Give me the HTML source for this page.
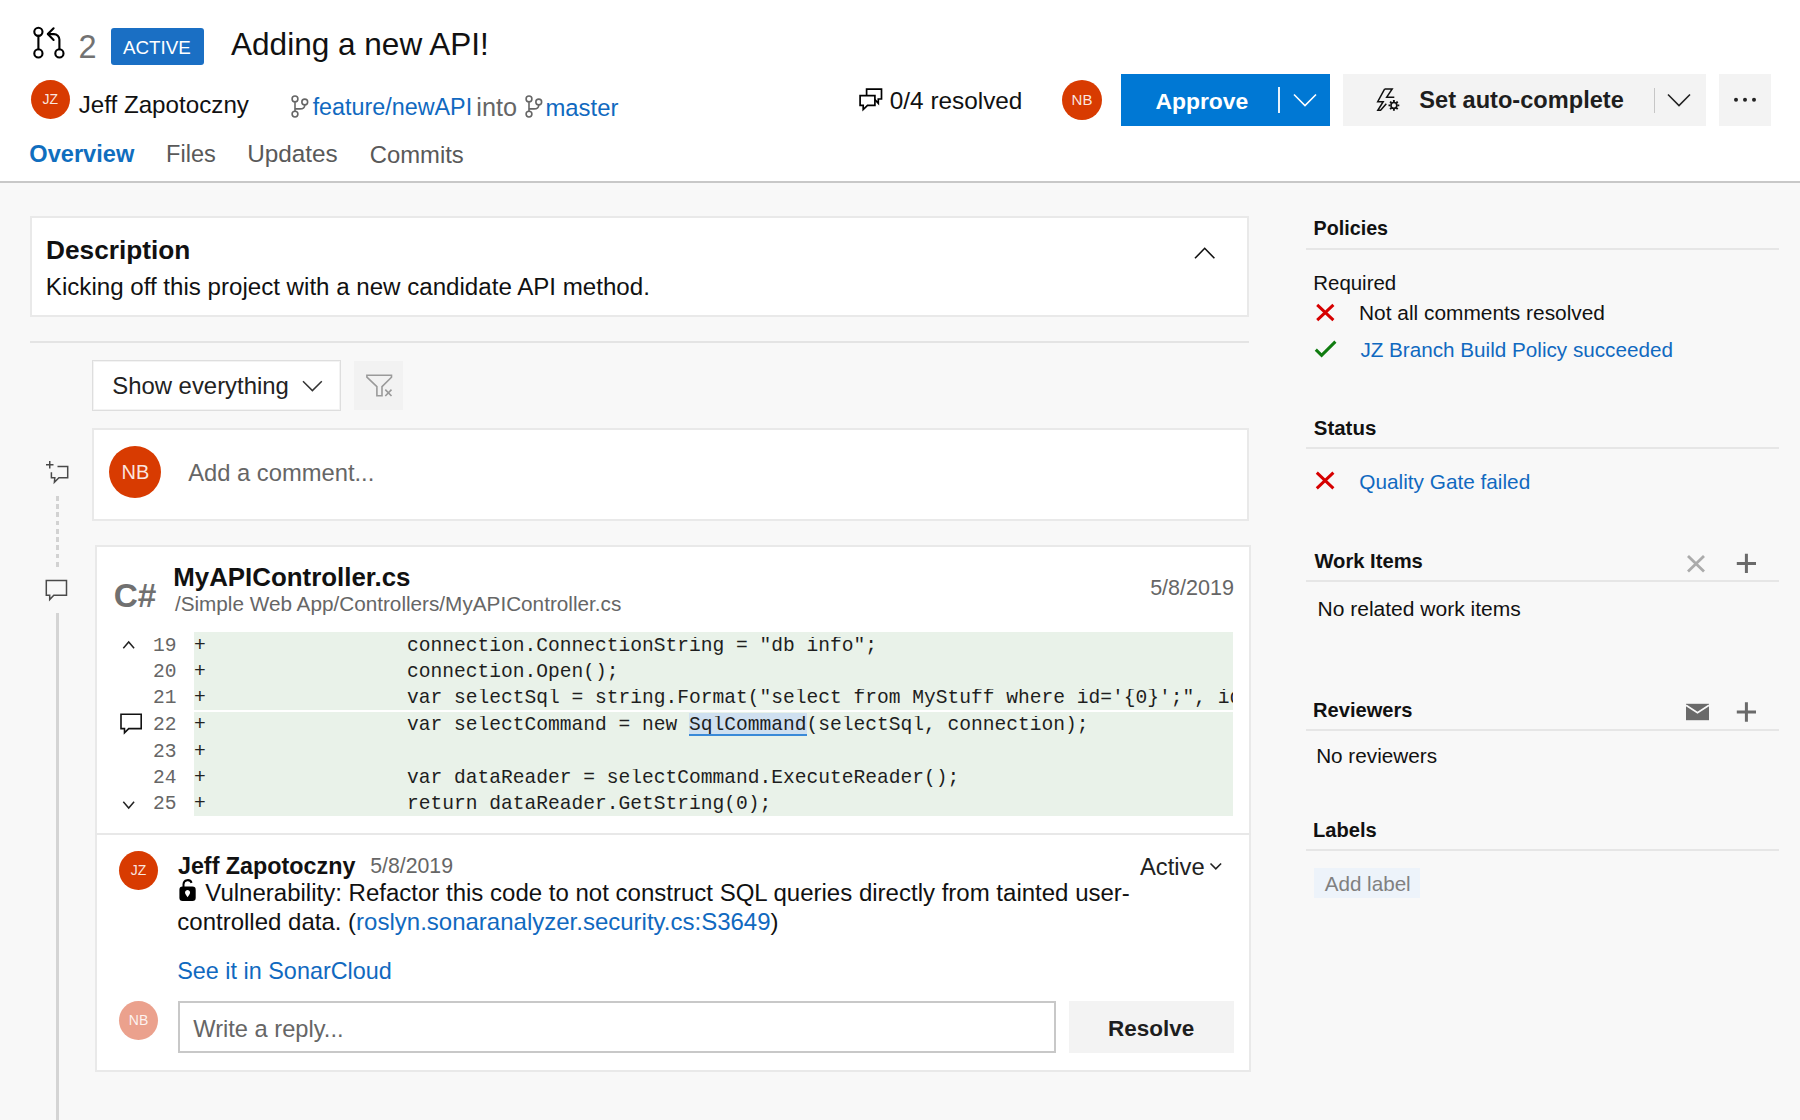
<!DOCTYPE html>
<html><head><meta charset="utf-8"><title>Pull request</title>
<style>
html,body{margin:0;padding:0}
body{width:1800px;height:1120px;position:relative;overflow:hidden;background:#f8f8f8;font-family:"Liberation Sans",sans-serif}
.t{position:absolute;white-space:pre}
.r{position:absolute}
svg.r{overflow:visible}
.av{border-radius:50%;text-align:center;font-family:"Liberation Sans",sans-serif}
</style></head><body>
<div class="r" style="left:0px;top:0px;width:1800px;height:181px;background:#fff"></div>
<div class="r" style="left:0px;top:181px;width:1800px;height:2px;background:#c8c8c8"></div>
<svg class="r" style="left:28px;top:22px;" width="44" height="40" viewBox="28 22 44 40"><g fill="none" stroke="#000" stroke-width="2.1" stroke-linecap="round" stroke-linejoin="round"><circle cx="38.4" cy="31.8" r="4.1"/><circle cx="38.4" cy="53.4" r="4.1"/><circle cx="59.4" cy="53.4" r="4.1"/><path d="M38.4 35.9V49.3"/><path d="M59.4 49.3V39.6A5.5 5.5 0 0 0 53.9 34.1H48"/><path d="M53.6 28.3L47.8 34.1L53.6 39.9"/></g></svg>
<div class="t" style="left:78.38px;top:30.88px;font-size:32.50px;line-height:32.50px;font-family:'Liberation Sans',sans-serif;font-weight:normal;color:#727272;">2</div>
<div class="r" style="left:111px;top:28px;width:93px;height:37px;background:#1a6fc4;border-radius:3px"></div>
<div class="t" style="left:123.00px;top:38.81px;font-size:18.77px;line-height:18.77px;font-family:'Liberation Sans',sans-serif;font-weight:normal;color:#fff;">ACTIVE</div>
<div class="t" style="left:231.00px;top:29.28px;font-size:31.56px;line-height:31.56px;font-family:'Liberation Sans',sans-serif;font-weight:normal;color:#111;">Adding a new API!</div>
<div class="r av" style="left:30.65px;top:79.75px;width:39.5px;height:39.5px;background:#d83b01;font-size:14px;line-height:39.5px;color:rgba(255,255,255,.88)">JZ</div>
<div class="t" style="left:78.64px;top:93.01px;font-size:24.20px;line-height:24.20px;font-family:'Liberation Sans',sans-serif;font-weight:normal;color:#111;">Jeff Zapotoczny</div>
<svg class="r" style="left:289px;top:94px;" width="24" height="26" viewBox="289 94 24 26"><g fill="none" stroke="#666" stroke-width="1.6" stroke-linecap="round"><circle cx="295" cy="98.9" r="2.9"/><circle cx="295" cy="114.1" r="2.9"/><circle cx="304.75" cy="102" r="2.9"/><path d="M295 101.8V111.2"/><path d="M304.75 104.9C304.75 108 302.5 108.9 300 108.9H295.6"/></g></svg>
<div class="t" style="left:312.65px;top:96.25px;font-size:23.33px;line-height:23.33px;font-family:'Liberation Sans',sans-serif;font-weight:normal;color:#1069c0;">feature/newAPI</div>
<div class="t" style="left:476.36px;top:94.62px;font-size:25.25px;line-height:25.25px;font-family:'Liberation Sans',sans-serif;font-weight:normal;color:#666;">into</div>
<svg class="r" style="left:523px;top:94px;" width="24" height="26" viewBox="523 94 24 26"><g fill="none" stroke="#666" stroke-width="1.6" stroke-linecap="round"><circle cx="529" cy="98.9" r="2.9"/><circle cx="529" cy="114.1" r="2.9"/><circle cx="538.75" cy="102" r="2.9"/><path d="M529 101.8V111.2"/><path d="M538.75 104.9C538.75 108 536.5 108.9 534 108.9H529.6"/></g></svg>
<div class="t" style="left:545.45px;top:95.79px;font-size:23.87px;line-height:23.87px;font-family:'Liberation Sans',sans-serif;font-weight:normal;color:#1069c0;">master</div>
<div class="t" style="left:29.36px;top:142.93px;font-size:23.58px;line-height:23.58px;font-family:'Liberation Sans',sans-serif;font-weight:bold;color:#106ebe;">Overview</div>
<div class="t" style="left:166.12px;top:142.95px;font-size:23.56px;line-height:23.56px;font-family:'Liberation Sans',sans-serif;font-weight:normal;color:#595959;">Files</div>
<div class="t" style="left:247.17px;top:142.29px;font-size:24.34px;line-height:24.34px;font-family:'Liberation Sans',sans-serif;font-weight:normal;color:#595959;">Updates</div>
<div class="t" style="left:369.81px;top:142.72px;font-size:23.83px;line-height:23.83px;font-family:'Liberation Sans',sans-serif;font-weight:normal;color:#595959;">Commits</div>
<svg class="r" style="left:854px;top:82px;" width="34" height="34" viewBox="854 82 34 34"><g fill="none" stroke="#000" stroke-width="1.7" stroke-linejoin="miter"><path d="M860.1 95.7H874.9V105.4H867.5L863.2 109.6V105.4H860.1Z"/><path d="M866.6 95.7V89.1H881.5V99H878.3V103.3L874.9 99.6"/></g></svg>
<div class="t" style="left:889.83px;top:88.89px;font-size:24.34px;line-height:24.34px;font-family:'Liberation Sans',sans-serif;font-weight:normal;color:#111;">0/4 resolved</div>
<div class="r av" style="left:1062.00px;top:79.50px;width:40px;height:40px;background:#d83b01;font-size:15px;line-height:40px;color:rgba(255,255,255,.88)">NB</div>
<div class="r" style="left:1121px;top:74px;width:209px;height:52px;background:#0078d4"></div>
<div class="t" style="left:1155.43px;top:89.51px;font-size:22.90px;line-height:22.90px;font-family:'Liberation Sans',sans-serif;font-weight:bold;color:#fff;">Approve</div>
<div class="r" style="left:1278px;top:87px;width:2px;height:25.5px;background:rgba(255,255,255,.9)"></div>
<svg class="r" style="left:1290px;top:90px;" width="30" height="20" viewBox="1290 90 30 20"><path d="M1294 94.5L1305 105.5L1316 94.5" fill="none" stroke="#fff" stroke-width="1.6"/></svg>
<div class="r" style="left:1343px;top:74px;width:362.5px;height:51.5px;background:#f3f3f3"></div>
<svg class="r" style="left:1372px;top:84px;" width="34" height="32" viewBox="1372 84 34 32"><g fill="none" stroke="#111" stroke-width="1.5" stroke-linejoin="miter"><path d="M1384.7 88.9H1392.2L1386.7 97.2H1394.3"/><path d="M1386.3 103.7L1380.6 110.3H1377.8L1383.2 101.7H1377.7L1384.7 88.9"/></g><g fill="none" stroke="#111" stroke-width="1.6"><circle cx="1393.9" cy="105.4" r="2.9"/></g><g stroke="#111" stroke-width="1.9" stroke-linecap="butt"><path d="M1393.9 100V102M1393.9 108.8V110.8M1388.5 105.4H1390.5M1397.3 105.4H1399.3M1390.1 101.6L1391.5 103M1396.3 107.8L1397.7 109.2M1397.7 101.6L1396.3 103M1391.5 107.8L1390.1 109.2"/></g></svg>
<div class="t" style="left:1419.29px;top:88.91px;font-size:23.60px;line-height:23.60px;font-family:'Liberation Sans',sans-serif;font-weight:bold;color:#1e1e1e;">Set auto-complete</div>
<div class="r" style="left:1653.5px;top:87.5px;width:1.5px;height:25.0px;background:#c6c6c6"></div>
<svg class="r" style="left:1664px;top:90px;" width="30" height="20" viewBox="1664 90 30 20"><path d="M1668 94.5L1679 105.5L1690 94.5" fill="none" stroke="#222" stroke-width="1.6"/></svg>
<div class="r" style="left:1719px;top:74px;width:52px;height:51.5px;background:#f3f3f3"></div>
<svg class="r" style="left:1730px;top:94px;" width="30" height="12" viewBox="1730 94 30 12"><g fill="#222"><circle cx="1736" cy="99.8" r="2"/><circle cx="1745" cy="99.8" r="2"/><circle cx="1754" cy="99.8" r="2"/></g></svg>
<div class="r" style="left:30px;top:216px;width:1219px;height:101px;background:#fff;box-sizing:border-box;border:2px solid #e9e9e9"></div>
<div class="t" style="left:46.09px;top:237.19px;font-size:26.23px;line-height:26.23px;font-family:'Liberation Sans',sans-serif;font-weight:bold;color:#111;">Description</div>
<div class="t" style="left:45.87px;top:274.98px;font-size:24.12px;line-height:24.12px;font-family:'Liberation Sans',sans-serif;font-weight:normal;color:#111;">Kicking off this project with a new candidate API method.</div>
<svg class="r" style="left:1190px;top:244px;" width="30" height="18" viewBox="1190 244 30 18"><path d="M1195 258.3L1204.7 248.3L1214.4 258.3" fill="none" stroke="#111" stroke-width="1.6"/></svg>
<div class="r" style="left:30px;top:341px;width:1219px;height:2px;background:#e4e4e4"></div>
<div class="r" style="left:92px;top:360px;width:249px;height:51px;background:#fff;box-sizing:border-box;border:1px solid #dedede;box-shadow:inset 0 0 0 1px #f3f3f3"></div>
<div class="t" style="left:112.22px;top:374.06px;font-size:23.90px;line-height:23.90px;font-family:'Liberation Sans',sans-serif;font-weight:normal;color:#222;">Show everything</div>
<svg class="r" style="left:300px;top:378px;" width="26" height="16" viewBox="300 378 26 16"><path d="M303 381.3L312.4 390.6L321.8 381.3" fill="none" stroke="#333" stroke-width="1.5"/></svg>
<div class="r" style="left:354px;top:361px;width:49px;height:49px;background:#f2f2f2"></div>
<svg class="r" style="left:362px;top:370px;" width="34" height="30" viewBox="362 370 34 30"><g fill="none" stroke="#9a9a9a" stroke-width="1.6" stroke-linejoin="miter"><path d="M366.9 375.3H391.5V377.2L382 386.6V395.8H376.9V386.6L366.9 377.2Z"/><path d="M385.3 389.6L391.5 396M391.5 389.6L385.3 396"/></g></svg>
<div class="r" style="left:92px;top:428px;width:1157px;height:93px;background:#fff;box-sizing:border-box;border:2px solid #e9e9e9"></div>
<div class="r av" style="left:109.40px;top:446.00px;width:52px;height:52px;background:#d83b01;font-size:20px;line-height:52px;color:rgba(255,255,255,.88)">NB</div>
<div class="t" style="left:188.20px;top:460.88px;font-size:23.76px;line-height:23.76px;font-family:'Liberation Sans',sans-serif;font-weight:normal;color:#666;">Add a comment...</div>
<svg class="r" style="left:42px;top:458px;" width="30" height="28" viewBox="42 458 30 28"><g fill="none" stroke="#4a4a4a" stroke-width="1.5" stroke-linejoin="miter"><path d="M49.75 461V468.4M46 464.7H53.5"/><path d="M57.5 466.4H67.7V477.8H58.9L54.4 482.2L54.8 477.8H51.4V472.3"/></g></svg>
<div class="r" style="left:55.6px;top:496px;width:3.1999999999999957px;height:71.5px;background:repeating-linear-gradient(to bottom,#d2d2d2 0,#d2d2d2 4.6px,transparent 4.6px,transparent 8.25px)"></div>
<svg class="r" style="left:42px;top:576px;" width="30" height="28" viewBox="42 576 30 28"><path d="M46.3 580.6H66.5V595.3H53.8L49.7 599.6V595.3H46.3Z" fill="none" stroke="#4a4a4a" stroke-width="1.5"/></svg>
<div class="r" style="left:55.6px;top:613px;width:3.1999999999999957px;height:507px;background:#d4d4d4"></div>
<div class="r" style="left:95px;top:545px;width:1156px;height:527px;background:#fff;box-sizing:border-box;border:2px solid #e9e9e9"></div>
<div class="t" style="left:113.77px;top:579.25px;font-size:33.36px;line-height:33.36px;font-family:'Liberation Sans',sans-serif;font-weight:bold;color:#707070;">C#</div>
<div class="t" style="left:173.22px;top:565.28px;font-size:25.89px;line-height:25.89px;font-family:'Liberation Sans',sans-serif;font-weight:bold;color:#111;">MyAPIController.cs</div>
<div class="t" style="left:174.90px;top:594.44px;font-size:20.73px;line-height:20.73px;font-family:'Liberation Sans',sans-serif;font-weight:normal;color:#666;">/Simple Web App/Controllers/MyAPIController.cs</div>
<div class="t" style="left:1150.14px;top:576.95px;font-size:21.55px;line-height:21.55px;font-family:'Liberation Sans',sans-serif;font-weight:normal;color:#666;">5/8/2019</div>
<div class="r" style="left:194px;top:632px;width:1039px;height:78px;background:#e9f2e9"></div>
<div class="r" style="left:194px;top:712px;width:1039px;height:104px;background:#e9f2e9"></div>
<div class="r" style="left:688.9px;top:712.5px;width:118.60000000000002px;height:23.5px;background:#cfe0f0;border-bottom:2px solid #3a8ad8;box-sizing:border-box"></div>
<div class="t" style="left:153.10px;top:636.84px;font-size:19.583px;line-height:19.58px;font-family:'Liberation Mono',monospace;color:#666">19</div>
<div class="t" style="left:194.00px;top:636.84px;font-size:19.583px;line-height:19.58px;font-family:'Liberation Mono',monospace;color:#222">+</div>
<div class="t" style="left:407.00px;top:636.84px;width:826.00px;overflow:hidden;font-size:19.583px;line-height:19.58px;font-family:'Liberation Mono',monospace;color:#1e1e1e">connection.ConnectionString = "db info";</div>
<div class="t" style="left:153.10px;top:662.69px;font-size:19.583px;line-height:19.58px;font-family:'Liberation Mono',monospace;color:#666">20</div>
<div class="t" style="left:194.00px;top:662.69px;font-size:19.583px;line-height:19.58px;font-family:'Liberation Mono',monospace;color:#222">+</div>
<div class="t" style="left:407.00px;top:662.69px;width:826.00px;overflow:hidden;font-size:19.583px;line-height:19.58px;font-family:'Liberation Mono',monospace;color:#1e1e1e">connection.Open();</div>
<div class="t" style="left:153.10px;top:688.99px;font-size:19.583px;line-height:19.58px;font-family:'Liberation Mono',monospace;color:#666">21</div>
<div class="t" style="left:194.00px;top:688.99px;font-size:19.583px;line-height:19.58px;font-family:'Liberation Mono',monospace;color:#222">+</div>
<div class="t" style="left:407.00px;top:688.99px;width:826.00px;overflow:hidden;font-size:19.583px;line-height:19.58px;font-family:'Liberation Mono',monospace;color:#1e1e1e">var selectSql = string.Format("select from MyStuff where id='{0}';", id);</div>
<div class="t" style="left:153.10px;top:716.49px;font-size:19.583px;line-height:19.58px;font-family:'Liberation Mono',monospace;color:#666">22</div>
<div class="t" style="left:194.00px;top:716.49px;font-size:19.583px;line-height:19.58px;font-family:'Liberation Mono',monospace;color:#222">+</div>
<div class="t" style="left:407.00px;top:716.49px;width:826.00px;overflow:hidden;font-size:19.583px;line-height:19.58px;font-family:'Liberation Mono',monospace;color:#1e1e1e">var selectCommand = new SqlCommand(selectSql, connection);</div>
<div class="t" style="left:153.10px;top:742.79px;font-size:19.583px;line-height:19.58px;font-family:'Liberation Mono',monospace;color:#666">23</div>
<div class="t" style="left:194.00px;top:742.79px;font-size:19.583px;line-height:19.58px;font-family:'Liberation Mono',monospace;color:#222">+</div>
<div class="t" style="left:153.10px;top:768.69px;font-size:19.583px;line-height:19.58px;font-family:'Liberation Mono',monospace;color:#666">24</div>
<div class="t" style="left:194.00px;top:768.69px;font-size:19.583px;line-height:19.58px;font-family:'Liberation Mono',monospace;color:#222">+</div>
<div class="t" style="left:407.00px;top:768.69px;width:826.00px;overflow:hidden;font-size:19.583px;line-height:19.58px;font-family:'Liberation Mono',monospace;color:#1e1e1e">var dataReader = selectCommand.ExecuteReader();</div>
<div class="t" style="left:153.10px;top:794.89px;font-size:19.583px;line-height:19.58px;font-family:'Liberation Mono',monospace;color:#666">25</div>
<div class="t" style="left:194.00px;top:794.89px;font-size:19.583px;line-height:19.58px;font-family:'Liberation Mono',monospace;color:#222">+</div>
<div class="t" style="left:407.00px;top:794.89px;width:826.00px;overflow:hidden;font-size:19.583px;line-height:19.58px;font-family:'Liberation Mono',monospace;color:#1e1e1e">return dataReader.GetString(0);</div>
<svg class="r" style="left:118px;top:636px;" width="20" height="18" viewBox="118 636 20 18"><path d="M123.3 648.3L128.7 642L134.1 648.3" fill="none" stroke="#222" stroke-width="1.5"/></svg>
<svg class="r" style="left:118px;top:796px;" width="20" height="18" viewBox="118 796 20 18"><path d="M123.3 801.8L128.7 808L134.1 801.8" fill="none" stroke="#222" stroke-width="1.5"/></svg>
<svg class="r" style="left:116px;top:710px;" width="30" height="28" viewBox="116 710 30 28"><path d="M121 714.2H141.2V728.6H128.7L124.5 732.8V728.6H121Z" fill="none" stroke="#111" stroke-width="1.6"/></svg>
<div class="r" style="left:95px;top:833px;width:1156px;height:2px;background:#e8e8e8"></div>
<div class="r av" style="left:119.00px;top:850.50px;width:39px;height:39px;background:#d83b01;font-size:14px;line-height:39px;color:rgba(255,255,255,.88)">JZ</div>
<div class="t" style="left:177.95px;top:854.55px;font-size:23.32px;line-height:23.32px;font-family:'Liberation Sans',sans-serif;font-weight:bold;color:#111;">Jeff Zapotoczny</div>
<div class="t" style="left:370.15px;top:856.28px;font-size:21.29px;line-height:21.29px;font-family:'Liberation Sans',sans-serif;font-weight:normal;color:#666;">5/8/2019</div>
<div class="t" style="left:1140.00px;top:854.97px;font-size:23.78px;line-height:23.78px;font-family:'Liberation Sans',sans-serif;font-weight:normal;color:#222;">Active</div>
<svg class="r" style="left:1206px;top:858px;" width="20" height="16" viewBox="1206 858 20 16"><path d="M1210.5 863.5L1215.8 868.8L1221.1 863.5" fill="none" stroke="#222" stroke-width="1.6"/></svg>
<svg class="r" style="left:176px;top:876px;" width="24" height="28" viewBox="176 876 24 28"><rect x="179.4" y="886.6" width="16.3" height="14.3" rx="3.2" fill="#000"/><path d="M183.5 887V884.3A4.2 4.2 0 0 1 191.6 882.8" fill="none" stroke="#000" stroke-width="2"/><path d="M187.55 889.9A2.7 2.7 0 0 1 189.4 894.4L187.55 897.2L185.7 894.4A2.7 2.7 0 0 1 187.55 889.9Z" fill="#fff"/></svg>
<div class="t" style="left:205.28px;top:881.05px;font-size:24.03px;line-height:24.03px;font-family:'Liberation Sans',sans-serif;font-weight:normal;color:#111;">Vulnerability: Refactor this code to not construct SQL queries directly from tainted user-</div>
<div class="t" style="left:177.34px;top:909.57px;font-size:24.01px;line-height:24.01px;font-family:'Liberation Sans',sans-serif;font-weight:normal;color:#111;">controlled data. (<span style="color:#1069c0">roslyn.sonaranalyzer.security.cs:S3649</span>)</div>
<div class="t" style="left:177.25px;top:960.09px;font-size:23.40px;line-height:23.40px;font-family:'Liberation Sans',sans-serif;font-weight:normal;color:#1069c0;">See it in SonarCloud</div>
<div class="r av" style="left:119.00px;top:1000.50px;width:39px;height:39px;background:#eba18d;font-size:14px;line-height:39px;color:rgba(255,255,255,.88)">NB</div>
<div class="r" style="left:178px;top:1001px;width:878px;height:52px;background:#fff;box-sizing:border-box;border:2px solid #c8c8c8"></div>
<div class="t" style="left:193.28px;top:1017.67px;font-size:23.66px;line-height:23.66px;font-family:'Liberation Sans',sans-serif;font-weight:normal;color:#666;">Write a reply...</div>
<div class="r" style="left:1069px;top:1001px;width:165px;height:51.5px;background:#f3f3f3"></div>
<div class="t" style="left:1107.94px;top:1017.96px;font-size:22.49px;line-height:22.49px;font-family:'Liberation Sans',sans-serif;font-weight:bold;color:#1e1e1e;">Resolve</div>
<div class="t" style="left:1313.62px;top:219.42px;font-size:19.70px;line-height:19.70px;font-family:'Liberation Sans',sans-serif;font-weight:bold;color:#111;">Policies</div>
<div class="r" style="left:1306px;top:248px;width:473px;height:2px;background:#e6e6e6"></div>
<div class="t" style="left:1313.26px;top:272.58px;font-size:20.46px;line-height:20.46px;font-family:'Liberation Sans',sans-serif;font-weight:normal;color:#111;">Required</div>
<svg class="r" style="left:1314px;top:301px;" width="23" height="22" viewBox="1314 301 23 22"><path d="M1317.2 304.8L1333.4 320.1M1333.4 304.8L1317.2 320.1" stroke="#d60000" stroke-width="3"/></svg>
<div class="t" style="left:1359.03px;top:303.32px;font-size:20.89px;line-height:20.89px;font-family:'Liberation Sans',sans-serif;font-weight:normal;color:#111;">Not all comments resolved</div>
<svg class="r" style="left:1312px;top:338px;" width="28" height="22" viewBox="1312 338 28 22"><path d="M1315.8 349.6L1321.6 355.3L1335.4 341.6" fill="none" stroke="#107c10" stroke-width="3"/></svg>
<div class="t" style="left:1360.39px;top:339.69px;font-size:20.68px;line-height:20.68px;font-family:'Liberation Sans',sans-serif;font-weight:normal;color:#1069c0;">JZ Branch Build Policy succeeded</div>
<div class="t" style="left:1313.79px;top:418.40px;font-size:20.44px;line-height:20.44px;font-family:'Liberation Sans',sans-serif;font-weight:bold;color:#111;">Status</div>
<div class="r" style="left:1306px;top:447px;width:473px;height:2px;background:#e6e6e6"></div>
<svg class="r" style="left:1313px;top:469px;" width="23" height="22" viewBox="1313 469 23 22"><path d="M1316.8 472.7L1333.4 488.4M1333.4 472.7L1316.8 488.4" stroke="#d60000" stroke-width="3"/></svg>
<div class="t" style="left:1359.37px;top:472.31px;font-size:20.78px;line-height:20.78px;font-family:'Liberation Sans',sans-serif;font-weight:normal;color:#1069c0;">Quality Gate failed</div>
<div class="t" style="left:1314.40px;top:551.11px;font-size:20.19px;line-height:20.19px;font-family:'Liberation Sans',sans-serif;font-weight:bold;color:#111;">Work Items</div>
<svg class="r" style="left:1682px;top:550px;" width="28" height="28" viewBox="1682 550 28 28"><path d="M1688 556L1704 571.5M1704 556L1688 571.5" stroke="#ababab" stroke-width="2.8"/></svg>
<svg class="r" style="left:1734px;top:551px;" width="24" height="24" viewBox="1734 551 24 24"><path d="M1736.8000000000002 563.4H1756.0M1746.4 553.6999999999999V573.1" stroke="#6a6a6a" stroke-width="3"/></svg>
<div class="r" style="left:1306px;top:580px;width:473px;height:2px;background:#e6e6e6"></div>
<div class="t" style="left:1317.52px;top:597.61px;font-size:21.02px;line-height:21.02px;font-family:'Liberation Sans',sans-serif;font-weight:normal;color:#111;">No related work items</div>
<div class="t" style="left:1313.09px;top:699.58px;font-size:20.10px;line-height:20.10px;font-family:'Liberation Sans',sans-serif;font-weight:bold;color:#111;">Reviewers</div>
<svg class="r" style="left:1684px;top:702px;" width="28" height="22" viewBox="1684 702 28 22"><path d="M1686 703.8H1709V720.2H1686Z" fill="#6a6a6a"/><path d="M1686 705.2L1697.5 712.7L1709 705.2" fill="none" stroke="#f8f8f8" stroke-width="1.8"/></svg>
<svg class="r" style="left:1734px;top:700px;" width="24" height="24" viewBox="1734 700 24 24"><path d="M1736.8000000000002 712H1756.0M1746.4 702.3V721.7" stroke="#6a6a6a" stroke-width="3"/></svg>
<div class="r" style="left:1306px;top:729px;width:473px;height:2px;background:#e6e6e6"></div>
<div class="t" style="left:1316.14px;top:746.24px;font-size:20.73px;line-height:20.73px;font-family:'Liberation Sans',sans-serif;font-weight:normal;color:#111;">No reviewers</div>
<div class="t" style="left:1313.09px;top:820.36px;font-size:20.13px;line-height:20.13px;font-family:'Liberation Sans',sans-serif;font-weight:bold;color:#111;">Labels</div>
<div class="r" style="left:1306px;top:849px;width:473px;height:2px;background:#e6e6e6"></div>
<div class="r" style="left:1314px;top:867.5px;width:106px;height:30.5px;background:#edf3fa"></div>
<div class="t" style="left:1324.70px;top:873.83px;font-size:20.63px;line-height:20.63px;font-family:'Liberation Sans',sans-serif;font-weight:normal;color:#808080;">Add label</div>
</body></html>
